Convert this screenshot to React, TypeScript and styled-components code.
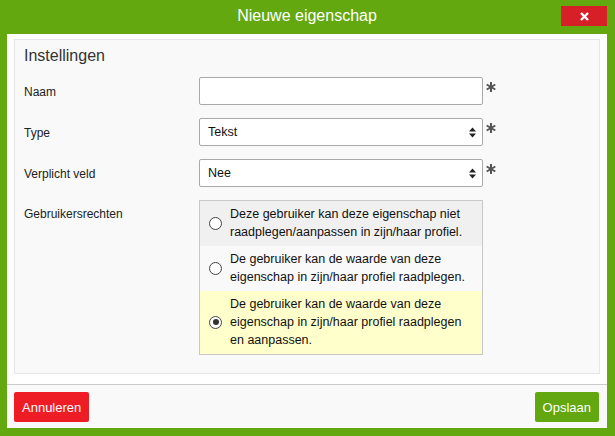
import styled, { createGlobalStyle } from "styled-components";

const GlobalStyle = createGlobalStyle`
  html, body {
    margin: 0;
    padding: 0;
    background: #63a80f;
  }
  body {
    font-family: "Liberation Sans", Arial, sans-serif;
    color: #222;
  }
`;

const Frame = styled.div`
  width: 615px;
  height: 436px;
  background: #63a80f;
  display: flex;
  flex-direction: column;
`;

const Header = styled.div`
  height: 34px;
  display: grid;
  grid-template-columns: 1fr auto 1fr;
  align-items: center;
  padding: 0 8px 0 7px;
`;

const Title = styled.h1`
  grid-column: 2;
  margin: 0;
  font-size: 16px;
  font-weight: normal;
  color: #fff;
  line-height: 20px;
  padding-bottom: 2px;
`;

const CloseButton = styled.button`
  grid-column: 3;
  justify-self: end;
  align-self: start;
  margin-top: 6px;
  width: 46px;
  height: 20px;
  border: 0;
  padding: 0;
  background: #d71f27;
  display: flex;
  align-items: center;
  justify-content: center;
`;

const Dialog = styled.div`
  margin: 0 8px 0 7px;
  background: #fff;
  display: flex;
  flex-direction: column;
`;

const Body = styled.div`
  padding: 5px 7px 10px 7px;
`;

const Fieldset = styled.fieldset`
  margin: 0;
  padding: 7px 9px 18px 9px;
  background: #f9f9f9;
  border: 1px solid #e6e6e6;
  display: flex;
  flex-direction: column;
  gap: 13px;
`;

const Legend = styled.div`
  font-size: 16px;
  line-height: 18px;
  color: #333;
  margin-bottom: -1px;
`;

const FormRow = styled.div<{ $top?: boolean }>`
  display: grid;
  grid-template-columns: 175px 284px 16px;
  align-items: ${(p) => (p.$top ? "start" : "center")};
`;

const Label = styled.label<{ $top?: boolean }>`
  font-size: 12px;
  line-height: 18px;
  color: #222;
  padding-top: ${(p) => (p.$top ? "5px" : "1px")};
`;

const TextInput = styled.input`
  box-sizing: border-box;
  height: 28px;
  width: 100%;
  margin: 0;
  border: 1px solid #a9a9a9;
  border-radius: 2px;
  background: #fff;
  padding: 0 9px;
  font: inherit;
  font-size: 12.5px;
  outline: none;
`;

const SelectWrap = styled.div`
  position: relative;
  height: 28px;
`;

const Select = styled.select`
  box-sizing: border-box;
  appearance: none;
  height: 28px;
  width: 100%;
  margin: 0;
  border: 1px solid #a9a9a9;
  border-radius: 2px;
  background: #fff;
  padding: 0 24px 0 8px;
  font-family: "Liberation Sans", Arial, sans-serif;
  font-size: 12.5px;
  color: #111;
  outline: none;
`;

const SortArrows = styled.svg`
  position: absolute;
  right: 7px;
  top: 9px;
  pointer-events: none;
`;

const Required = styled.svg`
  align-self: start;
  margin: 5px 0 0 3px;
`;

const RadioGroup = styled.div`
  border: 1px solid #c8c8c8;
  display: flex;
  flex-direction: column;
`;

const Option = styled.label<{ $bg: string }>`
  display: flex;
  align-items: center;
  gap: 8px;
  padding: 4px 10px 5px 9px;
  background: ${(p) => p.$bg};
  font-size: 12.5px;
  line-height: 18px;
  color: #111;
`;

const Radio = styled.span<{ $checked?: boolean }>`
  flex: none;
  box-sizing: border-box;
  width: 13px;
  height: 13px;
  border-radius: 50%;
  border: 1.5px solid #444;
  background: #fff;
  display: flex;
  align-items: center;
  justify-content: center;
  &::after {
    content: "";
    width: 6px;
    height: 6px;
    border-radius: 50%;
    background: ${(p) => (p.$checked ? "#333" : "transparent")};
  }
`;

const Footer = styled.div`
  border-top: 1px solid #cccccc;
  background: #f9f9f9;
  display: flex;
  justify-content: space-between;
  padding: 7px 8px 6px 7px;
`;

const Button = styled.button<{ $color: string }>`
  height: 30px;
  border: 0;
  border-radius: 2px;
  padding: 0 8px;
  background: ${(p) => p.$color};
  color: #fff;
  font-family: "Liberation Sans", Arial, sans-serif;
  font-size: 13px;
`;

const Asterisk = () => (
  <Required width="10" height="10" viewBox="0 0 10 10">
    <g stroke="#555" strokeWidth="2" strokeLinecap="butt">
      <line x1="5" y1="0" x2="5" y2="10" />
      <line x1="0.7" y1="2.5" x2="9.3" y2="7.5" />
      <line x1="0.7" y1="7.5" x2="9.3" y2="2.5" />
    </g>
  </Required>
);

const Arrows = () => (
  <SortArrows width="7" height="11" viewBox="0 0 7 11">
    <path d="M0 4.5 L3.5 0.5 L7 4.5 Z" fill="#222" />
    <path d="M0 6.5 L3.5 10.5 L7 6.5 Z" fill="#222" />
  </SortArrows>
);

const options = [
  {
    text: "Deze gebruiker kan deze eigenschap niet raadplegen/aanpassen in zijn/haar profiel.",
    bg: "#f0f0f0",
  },
  {
    text: "De gebruiker kan de waarde van deze eigenschap in zijn/haar profiel raadplegen.",
    bg: "#f9f9f9",
  },
  {
    text: "De gebruiker kan de waarde van deze eigenschap in zijn/haar profiel raadplegen en aanpassen.",
    bg: "#ffffcc",
    checked: true,
  },
];

const App = () => {
  return (
    <Frame>
      <GlobalStyle />
      <Header>
        <Title>Nieuwe eigenschap</Title>
        <CloseButton aria-label="Sluiten">
          <svg width="9" height="9" viewBox="0 0 9 9">
            <g stroke="#fff" strokeWidth="2.4">
              <line x1="1" y1="1" x2="8" y2="8" />
              <line x1="8" y1="1" x2="1" y2="8" />
            </g>
          </svg>
        </CloseButton>
      </Header>
      <Dialog>
        <Body>
          <Fieldset>
            <Legend>Instellingen</Legend>
            <FormRow>
              <Label>Naam</Label>
              <TextInput type="text" />
              <Asterisk />
            </FormRow>
            <FormRow>
              <Label>Type</Label>
              <SelectWrap>
                <Select defaultValue="tekst">
                  <option value="tekst">Tekst</option>
                </Select>
                <Arrows />
              </SelectWrap>
              <Asterisk />
            </FormRow>
            <FormRow>
              <Label>Verplicht veld</Label>
              <SelectWrap>
                <Select defaultValue="nee">
                  <option value="nee">Nee</option>
                </Select>
                <Arrows />
              </SelectWrap>
              <Asterisk />
            </FormRow>
            <FormRow $top>
              <Label $top>Gebruikersrechten</Label>
              <RadioGroup>
                {options.map((o) => (
                  <Option key={o.text} $bg={o.bg}>
                    <Radio $checked={o.checked} />
                    <span>{o.text}</span>
                  </Option>
                ))}
              </RadioGroup>
            </FormRow>
          </Fieldset>
        </Body>
        <Footer>
          <Button $color="#ee1c25">Annuleren</Button>
          <Button $color="#62a70f">Opslaan</Button>
        </Footer>
      </Dialog>
    </Frame>
  );
};

export default App;
